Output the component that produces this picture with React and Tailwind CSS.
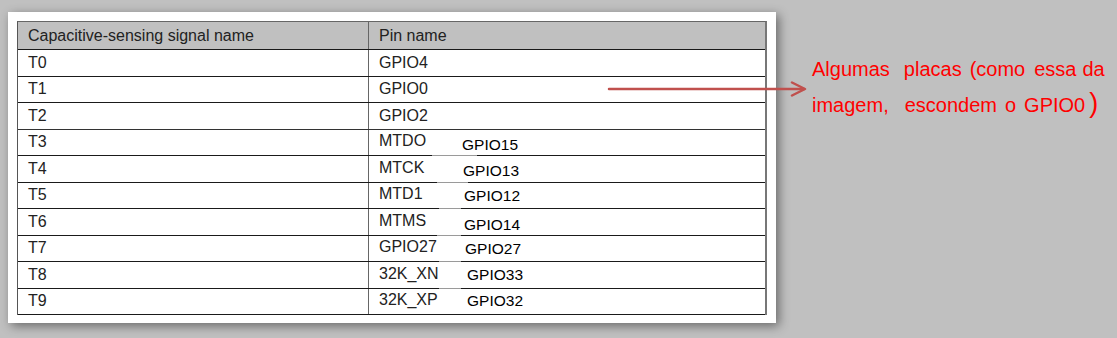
import React from "react";

const rows = [
  { signal: "T0", pin: "GPIO4" },
  { signal: "T1", pin: "GPIO0" },
  { signal: "T2", pin: "GPIO2" },
  {
    signal: "T3",
    pin: "MTDO",
    alt: "GPIO15",
    altClass: "left-[93px] translate-y-[2px]",
    gapClass: "left-[63px] w-[45px]",
  },
  {
    signal: "T4",
    pin: "MTCK",
    alt: "GPIO13",
    altClass: "left-[94px] translate-y-[2px]",
    gapClass: "left-[68px] w-[31px]",
  },
  {
    signal: "T5",
    pin: "MTD1",
    alt: "GPIO12",
    altClass: "left-[95px]",
    gapClass: "left-[70px] w-[22px]",
  },
  {
    signal: "T6",
    pin: "MTMS",
    alt: "GPIO14",
    altClass: "left-[95px] translate-y-[3px]",
    gapClass: "left-[68px] w-[24px]",
  },
  {
    signal: "T7",
    pin: "GPIO27",
    alt: "GPIO27",
    altClass: "left-[96px]",
    gapClass: "left-[70px] w-[22px]",
  },
  {
    signal: "T8",
    pin: "32K_XN",
    alt: "GPIO33",
    altClass: "left-[98px]",
    gapClass: "left-[70px] w-[22px]",
  },
  {
    signal: "T9",
    pin: "32K_XP",
    alt: "GPIO32",
    altClass: "left-[98px] -translate-y-[1px]",
  },
];

// words of the note, each with the space kept before it
const noteLines = [
  [
    ["Algumas", ""],
    ["placas", "ml-[14px]"],
    ["(como", "ml-[8px]"],
    ["essa", "ml-[9px]"],
    ["da", "ml-[6px]"],
  ],
  [
    ["imagem,", ""],
    ["escondem", "ml-[16px]"],
    ["o", "ml-[8px]"],
    ["GPIO0", "ml-[8px]"],
  ],
];

const TouchTable = () => (
  <div className="ml-2 mt-3 w-[768px] bg-white p-[9px] pb-2 shadow-[3px_3px_10px_rgba(0,0,0,0.45)]">
    <div className="border-l border-r-2 border-t border-l-[#555] border-r-[#777] border-t-[#666] text-[16px] text-[#222]">
      {/* Header */}
      <div className="flex h-[28px] border-b border-[#1a1a1a] bg-[#c0c0c0]">
        <div className="flex w-[351px] items-center border-r border-[#666] pl-[10px]">
          Capacitive-sensing signal name
        </div>
        <div className="flex flex-1 items-center pl-[10px]">Pin name</div>
      </div>

      {/* Body */}
      {rows.map((row, i) => (
        <div
          key={row.signal}
          className={`flex h-[26.5px] border-b bg-white ${
            i === 2 ? "border-[#333]" : "border-[#1a1a1a]"
          }`}
        >
          <div className="flex w-[351px] items-center border-r border-[#666] pl-[10px]">
            {row.signal}
          </div>
          <div className="relative flex flex-1 items-center pl-[10px]">
            <span className={row.alt ? "-translate-y-[1px]" : ""}>{row.pin}</span>
            {row.alt && (
              <span
                className={`absolute top-0 flex h-full items-center text-[15.5px] text-black ${row.altClass}`}
              >
                {row.alt}
              </span>
            )}
            {row.gapClass && (
              <div
                className={`absolute -bottom-px h-px bg-[#9a9a9a] ${row.gapClass}`}
              />
            )}
          </div>
        </div>
      ))}
    </div>
  </div>
);

export default function App() {
  return (
    <div
      className="relative flex h-[338px] w-[1117px] items-start overflow-hidden bg-[#c0c0c0]"
      style={{ fontFamily: '"Liberation Sans", Arial, sans-serif' }}
    >
      <TouchTable />

      {/* Note about GPIO0 */}
      <div className="ml-[36px] mt-[51px] text-[20px] leading-[36px] text-[#ff0000]">
        {noteLines.map((line, i) => (
          <div key={i} className="flex items-baseline whitespace-nowrap">
            {line.map(([word, gap]) => (
              <span key={word} className={gap}>
                {word}
              </span>
            ))}
            {i === 1 && <span className="ml-[4px] text-[27px] leading-[27px]">)</span>}
          </div>
        ))}
      </div>

      {/* Arrow pointing at the GPIO0 row */}
      <svg
        className="absolute left-[606px] top-[81px]"
        width="204"
        height="16"
        viewBox="0 0 204 16"
      >
        <line
          x1="3"
          y1="8"
          x2="198"
          y2="8"
          stroke="#c0504d"
          strokeWidth="2.5"
          strokeLinecap="round"
        />
        <polyline
          points="186,1.5 199,8 186,14.5"
          fill="none"
          stroke="#c0504d"
          strokeWidth="2.5"
          strokeLinecap="round"
          strokeLinejoin="round"
        />
      </svg>
    </div>
  );
}
